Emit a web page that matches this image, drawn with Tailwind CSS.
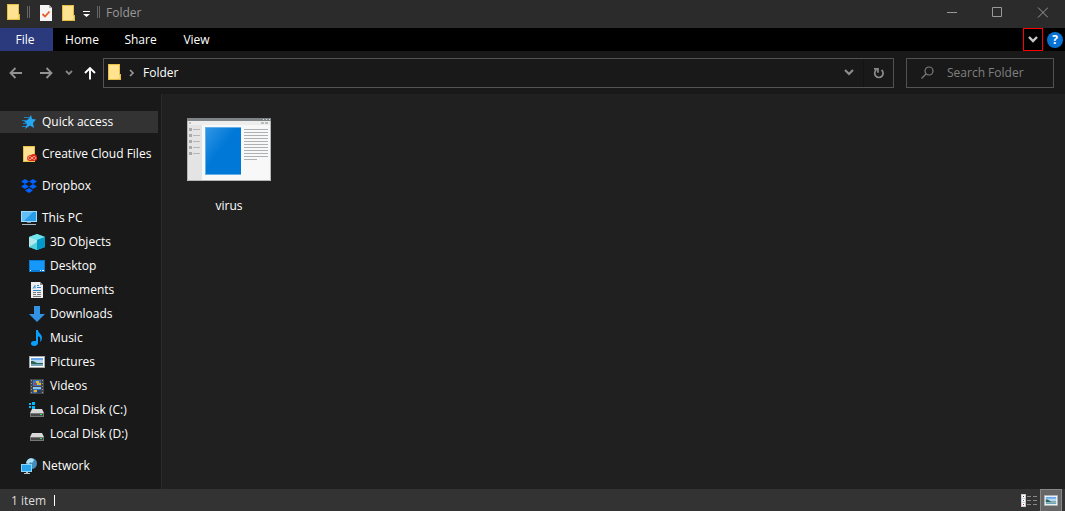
<!DOCTYPE html>
<html lang="en">

<head>
    <meta charset="utf-8" />
    <meta name="viewport" content="width=device-width, initial-scale=1" />
    <title>Folder</title>
    <script src="https://cdn.jsdelivr.net/npm/@tailwindcss/browser@4"></script>
</head>

<body class="flex flex-col min-h-screen bg-[#202020] text-white text-[12px] leading-4 font-['Open_Sans','Noto_Sans',sans-serif]">
    <!-- Shared icons -->
    <svg class="hidden">
        <symbol id="folder" viewBox="0 0 14 16">
            <path fill="#e8bf45" d="M0 0h12v10h1v6H0z" />
            <path fill="#ffe391" d="M1 1h10v13l-1 1H1z" />
            <path fill="#f7d774" d="M11 11h1v4h-1z" />
        </symbol>
        <symbol id="drive" viewBox="0 0 16 16">
            <path fill="#d9d9d9" d="M3 6h10l2 4H1z" />
            <path fill="#777" d="M1 10h14v4H1z" />
            <path fill="#484848" d="M2 11h12v2H2z" />
            <path fill="#20e060" d="M11 11h2v1h-2z" />
        </symbol>
        <symbol id="photo" viewBox="0 0 16 12">
            <path fill="#a8a8a8" d="M0 0h16v12H0z" />
            <path fill="#fff" d="M1 1h14v10H1z" />
            <path fill="#6aa8ea" d="M2 2h12v3H2z" />
            <path fill="#b5d8f5" d="M2 4h12v3H2z" />
            <path fill="#2c6355" d="M2 5h2l4 2h6v1H2z" />
            <path fill="#6fa6b5" d="M2 8h12v2H2z" />
        </symbol>
    </svg>

    <!-- Title bar -->
    <header class="flex items-center h-7 bg-[#2b2b2b] text-[#999]">
        <svg class="w-[14px] h-4 ml-[7px] mb-1"><use href="#folder" /></svg>
        <span class="w-[3px] h-3 ml-[6px] mb-1 border-x border-[#666]"></span>
        <button aria-label="Properties" class="ml-[10px] mb-[2px]">
            <svg class="w-3 h-4" viewBox="0 0 12 16">
                <path fill="#f5f5f5" d="M0 0h9l3 3v13H0z" />
                <path fill="#b5b5b5" d="M9 0l3 3H9z" />
                <path fill="none" stroke="#e85c27" stroke-width="1.800" d="M2.500 9l2.500 2.500L9.500 6.500" />
            </svg>
        </button>
        <button aria-label="New folder" class="ml-[10px] mb-[2px]">
            <svg class="w-[14px] h-4"><use href="#folder" /></svg>
        </button>
        <button aria-label="Customize Quick Access Toolbar" class="ml-[7px]">
            <svg class="w-[7px] h-[6px]" viewBox="0 0 7 6">
                <path fill="#fff" d="M0 0h7v1H0zM0 3h7L3.500 6z" />
            </svg>
        </button>
        <span class="w-[3px] h-3 ml-[7px] mb-1 border-x border-[#666]"></span>
        <h1 class="ml-[6px] mb-[2px]">Folder</h1>
        <div class="flex ml-auto mb-1">
            <button aria-label="Minimize" class="flex justify-center w-[45px]">
                <svg class="size-[11px]" fill="none" stroke="currentColor" viewBox="0 0 11 11"><path d="M1 5.500h10" /></svg>
            </button>
            <button aria-label="Maximize" class="flex justify-center w-[46px]">
                <svg class="size-[11px]" fill="none" stroke="currentColor" viewBox="0 0 11 11"><path d="M.5.5h9v9h-9z" /></svg>
            </button>
            <button aria-label="Close" class="flex justify-center w-[45px]">
                <svg class="size-[11px]" fill="none" stroke="currentColor" viewBox="0 0 11 11"><path d="M1 .5l10 10M11 .5l-10 10" /></svg>
            </button>
        </div>
    </header>

    <!-- Ribbon tabs -->
    <nav class="flex items-center h-[23px] bg-black">
        <button class="w-[53px] h-full pr-[3px] bg-[#2b3a7c]">File</button>
        <button class="w-[58px] h-full">Home</button>
        <button class="w-[59px] h-full">Share</button>
        <button class="w-[53px] h-full">View</button>
        <button aria-label="Expand the Ribbon" class="flex justify-center items-center w-5 h-full ml-auto border border-[#f00]">
            <svg class="w-[10px] h-[7px]" fill="none" stroke="#c8c8c8" stroke-width="2.400" viewBox="0 0 10 7"><path d="M1 1l4 4 4-4" /></svg>
        </button>
        <button aria-label="Help" class="flex justify-center items-center size-4 ml-1 mr-[2px] rounded-full bg-[#0872d3] font-bold">?</button>
    </nav>

    <!-- Navigation and address -->
    <div class="flex items-center h-[43px] pr-[11px] bg-[#191919]">
        <button aria-label="Back" class="ml-[9px]">
            <svg class="size-[14px]" fill="none" stroke="#939393" stroke-width="1.800" viewBox="0 0 14 14"><path d="M13 7H2M6.500 2L1.500 7l5 5" /></svg>
        </button>
        <button aria-label="Forward" class="ml-4">
            <svg class="size-[14px]" fill="none" stroke="#939393" stroke-width="1.800" viewBox="0 0 14 14"><path d="M1 7h11M7.500 2l5 5-5 5" /></svg>
        </button>
        <button aria-label="Recent locations" class="ml-[12px]">
            <svg class="w-2 h-[6px]" fill="none" stroke="#858585" stroke-width="1.800" viewBox="0 0 8 6"><path d="M1 1l3 3 3-3" /></svg>
        </button>
        <button aria-label="Up" class="ml-[10px]">
            <svg class="size-[14px]" fill="none" stroke="#fff" stroke-width="1.900" viewBox="0 0 14 14"><path d="M7 13.500V2M2 7l5-5 5 5" /></svg>
        </button>
        <div class="flex items-center grow h-[30px] ml-[6px] border border-[#535353]">
            <svg class="w-[14px] h-4 ml-1 mb-[2px]"><use href="#folder" /></svg>
            <svg class="w-[6px] h-2 ml-[7px]" fill="none" stroke="#999" stroke-width="1.600" viewBox="0 0 6 8"><path d="M1 1l3 3-3 3" /></svg>
            <button class="ml-2">Folder</button>
            <button aria-label="Previous locations" class="flex justify-center items-center w-[29px] h-full ml-auto">
                <svg class="w-[10px] h-[7px]" fill="none" stroke="#8b8b8b" stroke-width="2.200" viewBox="0 0 10 7"><path d="M1 1l4 4 4-4" /></svg>
            </button>
            <button aria-label="Refresh" class="flex justify-center items-center w-[30px] h-full border-l border-[#141414]">
                <svg class="size-3" fill="none" stroke="#8b8b8b" stroke-width="1.700" viewBox="0 0 12 12"><path d="M8.500 3A4.200 4.200 0 1 1 3.300 3M1 1.800h4v4" /></svg>
            </button>
        </div>
        <label class="flex items-center w-[148px] h-[30px] ml-3 pl-[14px] border border-[#535353]">
            <svg class="size-[13px] shrink-0" fill="none" stroke="#7c7c7c" stroke-width="1.200" viewBox="0 0 13 13">
                <circle cx="8" cy="5" r="4" />
                <path d="M5 8l-4.500 4.500" />
            </svg>
            <input type="search" placeholder="Search Folder" aria-label="Search Folder" class="min-w-0 grow ml-[13px] bg-transparent outline-none placeholder:text-[#808080]" />
        </label>
    </div>

    <div class="flex grow">
        <!-- Navigation pane -->
        <nav class="w-[162px] shrink-0 pt-[17px] pb-3 pr-[3px] bg-[#191919] border-r border-[#2b2b2b] whitespace-nowrap">
            <ul class="flex flex-col gap-[10px]">
                <li>
                    <a href="#" class="flex items-center gap-[5px] h-[22px] pl-[21px] bg-[#333]">
                        <svg class="size-4" viewBox="0 0 16 16">
                            <path fill="#25a6f0" d="M10 1l1 4 4 .5-3 3.500 1 5-4-2.500L4 15l2-5-3-3 4-1.500z" />
                            <path stroke="#1c7fbd" d="M3 3.500h5M1 6.500h5M2 9.500h4M1 12.500h4" />
                        </svg>
                        Quick access
                    </a>
                </li>
                <li>
                    <a href="#" class="flex items-center gap-[5px] h-[22px] pl-[21px]">
                        <svg class="size-4" viewBox="0 0 16 16">
                            <path fill="#e8bf45" d="M2 0h12v16H2z" />
                            <path fill="#ffe391" d="M3 1h10v14H3z" />
                            <path fill="#e3261b" d="M6 12c0-2 2-3 4-3 2-2 6-1 6 2 1 3-1 4-3 4H9c-2 0-3-1-3-3z" />
                            <path fill="none" stroke="#ffd3a5" stroke-width=".8" d="M12.500 13.500l-3-3c-3-.5-3 3-.5 3 2 0 2-3 4-3 2.500 0 2 3 0 3" />
                        </svg>
                        Creative Cloud Files
                    </a>
                </li>
                <li>
                    <a href="#" class="flex items-center gap-[5px] h-[22px] pl-[21px]">
                        <svg class="size-4" viewBox="0 0 16 16">
                            <path fill="#0062ff" d="M4 1l4 2.500L4 6 0 3.500zM12 1l4 2.500L12 6 8 3.500zM4 6l4 2.500L4 11 0 8.500zM12 6l4 2.500-4 2.500-4-2.500zM8 10l4 2.500L8 15l-4-2.500z" />
                        </svg>
                        Dropbox
                    </a>
                </li>
                <li>
                    <a href="#" class="flex items-center gap-[5px] h-[22px] pl-[21px]">
                        <svg class="size-4" viewBox="0 0 16 16">
                            <path fill="#9ddcff" d="M0 1h16v11H0z" />
                            <path fill="#289ce8" d="M1 2h14v9H1z" />
                            <path fill="#64bdf5" d="M1 2h11L3 11H1z" />
                            <path fill="#7a8994" d="M6 12h4v1H6z" />
                            <path fill="#a9bac6" d="M1 14h14v1H1z" />
                        </svg>
                        This PC
                    </a>
                    <ul class="flex flex-col gap-[2px] mt-[2px]">
                        <li>
                            <a href="#" class="flex items-center gap-[5px] h-[22px] pl-[29px]">
                                <svg class="size-4" viewBox="0 0 16 16">
                                    <path fill="#36c5dc" d="M8 0l8 3v10l-8 3-8-3V3z" />
                                    <path fill="#73e3ec" d="M8 0l8 3-8 3-8-3z" />
                                    <path fill="#b2e7e9" d="M0 3l8 3v5l-8 2z" />
                                    <path fill="#52cfd8" d="M0 13l8-5v8z" />
                                    <path fill="#0099c9" d="M16 3L8 6v10l8-3z" />
                                </svg>
                                3D Objects
                            </a>
                        </li>
                        <li>
                            <a href="#" class="flex items-center gap-[5px] h-[22px] pl-[29px]">
                                <svg class="size-4" viewBox="0 0 16 16">
                                    <path fill="#0878d0" d="M0 2h16v12H0z" />
                                    <path fill="#1598fa" d="M1 3h14v9H1z" />
                                    <path fill="#fff" d="M1 12h1v1H1zM11 12h1v1h-1zM13 12h2v1h-2z" />
                                </svg>
                                Desktop
                            </a>
                        </li>
                        <li>
                            <a href="#" class="flex items-center gap-[5px] h-[22px] pl-[29px]">
                                <svg class="size-4" viewBox="0 0 16 16">
                                    <path fill="#eee" d="M2 0h9l3 3v13H2z" />
                                    <path fill="#8a8a8a" d="M11 0l3 3h-3z" />
                                    <path fill="none" stroke="#268bd2" d="M4 6.500l2-3v3M8 3.500h2M8 5.500h4M4 8.500h8" />
                                    <path stroke="#777" d="M4 10.500h3M8 10.500h4M4 12.500h3M8 12.500h4M4 14.500h8" />
                                </svg>
                                Documents
                            </a>
                        </li>
                        <li>
                            <a href="#" class="flex items-center gap-[5px] h-[22px] pl-[29px]">
                                <svg class="size-4" viewBox="0 0 16 16"><path fill="#3293e5" d="M5 0h6v8h5l-8 8-8-8h5z" /></svg>
                                Downloads
                            </a>
                        </li>
                        <li>
                            <a href="#" class="flex items-center gap-[5px] h-[22px] pl-[29px]">
                                <svg class="size-4" viewBox="0 0 16 16">
                                    <path fill="#06a0ff" d="M7 0h2c0 3 4 4 4 8 0 2-1 3-2 4 1-4 0-5-2-6v7c0 2-2 3-4 3-4 0-4-5 0-5h2z" />
                                </svg>
                                Music
                            </a>
                        </li>
                        <li>
                            <a href="#" class="flex items-center gap-[5px] h-[22px] pl-[29px]">
                                <svg class="w-4 h-3"><use href="#photo" /></svg>
                                Pictures
                            </a>
                        </li>
                        <li>
                            <a href="#" class="flex items-center gap-[5px] h-[22px] pl-[29px]">
                                <svg class="size-4" viewBox="0 0 16 16">
                                    <path fill="#454545" d="M1 1h14v15H1z" />
                                    <path stroke="#999" stroke-dasharray="1 2" d="M2.500 2v13M13.500 2v13" />
                                    <path fill="#3973c4" d="M4 2h8v6H4zM4 9h8v6H4z" />
                                    <path fill="#e5b72e" d="M7 3h3v2h2v2H8V5H7zM5 12h3v2H5z" />
                                    <path fill="#a53f73" d="M5 5h2v2H5z" />
                                    <path fill="#8cc6ef" d="M4 9h8v2H4z" />
                                    <path fill="#253b67" d="M8 12h4v3H8z" />
                                </svg>
                                Videos
                            </a>
                        </li>
                        <li>
                            <a href="#" class="flex items-center gap-[5px] h-[22px] pl-[29px]">
                                <svg class="size-4" viewBox="0 0 16 16">
                                    <use href="#drive" y="1" width="16" height="16" />
                                    <path fill="#00baff" d="M0 1h2v2H0zM3 0h3v3H3zM0 4h2v2H0zM3 4h3v3H3z" />
                                </svg>
                                Local Disk (C:)
                            </a>
                        </li>
                        <li>
                            <a href="#" class="flex items-center gap-[5px] h-[22px] pl-[29px]">
                                <svg class="size-4" viewBox="0 0 16 16"><use href="#drive" y="1" width="16" height="16" /></svg>
                                Local Disk (D:)
                            </a>
                        </li>
                    </ul>
                </li>
                <li>
                    <a href="#" class="flex items-center gap-[5px] h-[22px] pl-[21px]">
                        <svg class="size-4" viewBox="0 0 16 16">
                            <circle cx="10.500" cy="5.500" r="5.500" fill="#438db8" />
                            <path fill="#b3e0f2" d="M6 3c2-4 6-3 7-1l-2 3-2-1-1 2-3-1z" />
                            <path fill="#8cd5fa" d="M0 6h11v8H0z" />
                            <path fill="#2aa5ef" d="M1 7h9v6H1z" />
                            <path fill="#b8c6cf" d="M5 14h2v1h2v1H3v-1h2z" />
                        </svg>
                        Network
                    </a>
                </li>
            </ul>
        </nav>

        <!-- Folder contents -->
        <main class="grow pt-6 pl-[25px]">
            <a href="#" class="flex flex-col items-center gap-[17px] w-[84px]">
                <svg class="w-[84px] h-[63px]" viewBox="0 0 84 63">
                    <defs>
                        <linearGradient id="blue" x1="0" y1="0" x2="1" y2="1">
                            <stop offset="0" stop-color="#3095e5" />
                            <stop offset=".45" stop-color="#0078d7" />
                        </linearGradient>
                    </defs>
                    <path fill="#f8f8f8" d="M0 0h84v63H0z" />
                    <path fill="#7f8487" d="M0 0h84v3H0z" />
                    <path fill="#ddd" d="M76 1h1v1h-1zM79 1h1v1h-1zM82 1h1v1h-1z" />
                    <path fill="#ededed" d="M0 3h84v4H0z" />
                    <path fill="#bbb" d="M2 4h2v2H2zM74 4h3v2h-3zM78 4h3v2h-3z" />
                    <path fill="#e4e4e4" d="M0 7h15v55H0z" />
                    <path fill="#a9a9a9" d="M2 10h3v3H2zM2 16h3v3H2zM2 22h3v3H2zM2 28h3v3H2zM2 34h3v3H2z" />
                    <path stroke="#b5b5b5" d="M6 11.500h7M6 17.500h7M6 23.500h7M6 29.500h7M6 35.500h7" />
                    <path fill="#66afe9" d="M18 9h36v48H18z" />
                    <path fill="url(#blue)" d="M19 10h35v46H19z" />
                    <path stroke="#aeb1b4" d="M57 11.500h24M57 14.500h24M57 17.500h24M57 20.500h24M57 23.500h24M57 26.500h24M57 29.500h24M57 32.500h24M57 35.500h24M57 38.500h24M57 41.500h13" />
                    <path fill="none" stroke="#b5b5b5" d="M.5 3v59.500h83V3" />
                </svg>
                <span>virus</span>
            </a>
        </main>
    </div>

    <!-- Status bar -->
    <footer class="flex items-center h-[22px] pl-[11px] pr-[3px] bg-[#333] text-[#ddd]">
        <span class="pt-[2px]">1 item</span>
        <span class="w-px h-[11px] ml-2 bg-white"></span>
        <button aria-label="Details view" class="ml-auto mr-[3px]">
            <svg class="w-4 h-[13px]" viewBox="0 0 16 13">
                <path fill="#ccc" d="M0 0h5v13H0z" />
                <path fill="#fff" d="M1 1h3v3H1zM1 5h3v3H1zM1 9h3v3H1z" />
                <path fill="#444" d="M2 2h1v1H2z" />
                <path fill="#3f7be0" d="M2 6h1v1H2z" />
                <path fill="#d02040" d="M2 10h1v1H2z" />
                <path stroke="#888" d="M6 2.500h4M12 2.500h4M6 6.500h4M12 6.500h4M6 10.500h4M12 10.500h4" />
            </svg>
        </button>
        <button aria-label="Large icons view" class="flex justify-center items-center w-[22px] h-full bg-[#666] border border-b-0 border-[#888]">
            <svg class="w-[14px] h-[11px]" viewBox="0 0 16 12" preserveAspectRatio="none"><use href="#photo" /></svg>
        </button>
    </footer>
</body>

</html>
